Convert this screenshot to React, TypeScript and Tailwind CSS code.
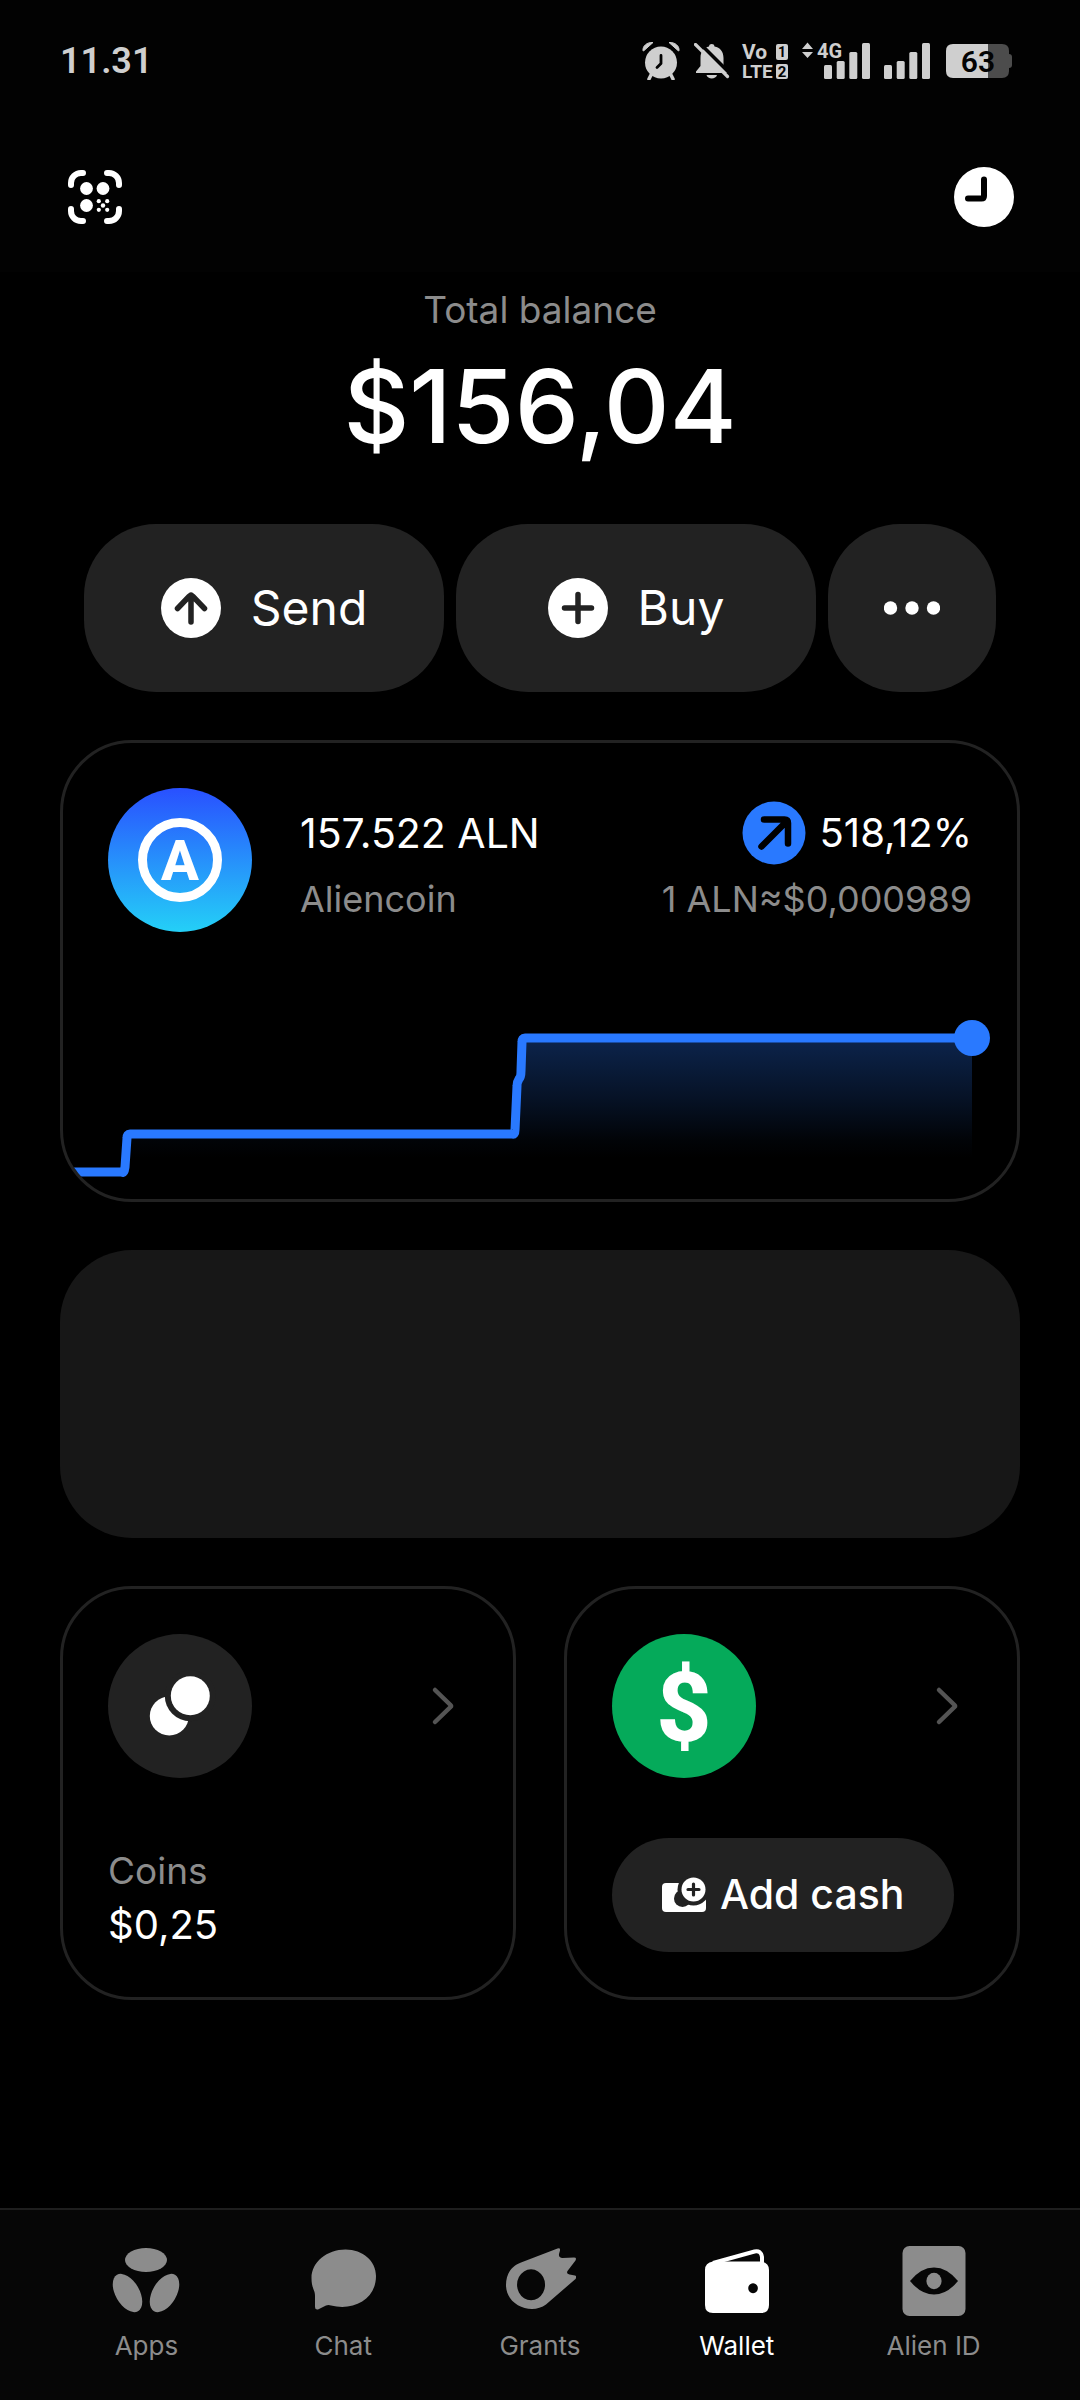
import type { ReactNode } from "react";

function SignalBars() {
  return (
    <svg viewBox="0 0 46 36" className="h-9 w-[46px]" fill="currentColor" aria-hidden="true">
      <rect x="0" y="22" width="8" height="14" rx="1.5" />
      <rect x="12.7" y="18" width="8" height="18" rx="1.5" />
      <rect x="25.3" y="9" width="8" height="27" rx="1.5" />
      <rect x="38" y="0" width="8" height="36" rx="1.5" />
    </svg>
  );
}

function StatusBar() {
  return (
    <div className="flex h-[122px] items-center justify-between pl-[60px] pr-[68px] font-['Roboto',sans-serif] text-[#cfcfcf]">
      <span className="text-4xl font-semibold">11.31</span>

      <div className="flex items-center">
        <svg viewBox="0 0 38 38" className="h-[38px] w-[38px]" fill="currentColor" aria-hidden="true">
          <path d="M1 8.500C.5 4 5 0 11 .5L1.500 9Z" stroke="currentColor" strokeLinejoin="round" />
          <path d="M37 8.500C37.500 4 33 0 27 .5L36.500 9Z" stroke="currentColor" strokeLinejoin="round" />
          <circle cx="19" cy="20.500" r="16" />
          <path d="M9 33l-2 4M29 33l2 4" stroke="currentColor" strokeWidth="3.500" strokeLinecap="round" />
          <path d="M19 13.500v8l-4 4" fill="none" stroke="#030303" strokeWidth="2.800" strokeLinecap="round" strokeLinejoin="round" />
        </svg>

        <svg viewBox="0 0 36 36" className="ml-3.5 h-9 w-9" fill="currentColor" aria-hidden="true">
          <path d="M2 30V28.500L6.500 23V15C6.500 8 10 4.500 15 3.500C15 .2 20.500 .2 20.500 3.500C26 4.500 29.500 8.500 29.500 15V23L33.500 28.500V30Z" />
          <path d="M12.500 32H23C22 36.500 13.500 36.500 12.500 32Z" />
          <path d="M3 -2.500L37 31.500" stroke="#030303" strokeWidth="3.500" />
          <path d="M1.500 1.500L33.500 33.500" stroke="currentColor" strokeWidth="3.200" strokeLinecap="round" />
        </svg>

        <svg viewBox="0 0 46 36" className="ml-3 h-9 w-[46px] overflow-visible" fill="currentColor" role="img" aria-label="VoLTE 1 and 2">
          <text x="0" y="16" fontSize="21" fontWeight="700">Vo</text>
          <text x="0" y="35" fontSize="19" fontWeight="700">LTE</text>
          <rect x="34" y="1" width="12" height="16" rx="2" />
          <rect x="34" y="21" width="12" height="15" rx="2" />
          <text x="40" y="14" fontSize="14" fontWeight="700" fill="#030303" textAnchor="middle">1</text>
          <text x="40" y="34" fontSize="15" fontWeight="700" fill="#030303" textAnchor="middle">2</text>
        </svg>

        <div className="relative ml-9">
          <SignalBars />
          <svg viewBox="0 0 42 18" className="absolute -left-[22px] -top-px h-[18px] w-[42px] overflow-visible" fill="currentColor" role="img" aria-label="4G">
            <path d="M0 7L5.500 .5L11 7ZM0 10L5.500 16L11 10Z" />
            <text x="15" y="16" fontSize="20" fontWeight="700">4G</text>
          </svg>
        </div>

        <div className="ml-3.5">
          <SignalBars />
        </div>

        <svg viewBox="0 0 66 34" className="ml-4 h-[34px] w-[66px] overflow-visible" fill="currentColor" role="img" aria-label="Battery 63%">
          <path d="M62 10h1q3 0 3 3v8q0 3-3 3h-1Z" fill="#4c4c4c" />
          <path d="M42 0h14q7 0 7 7v20q0 7-7 7H42Z" fill="#4c4c4c" />
          <path d="M42 0H7Q0 0 0 7v20q0 7 7 7h35Z" />
          <text x="32" y="28" fontSize="30" fontWeight="600" fill="#030303" textAnchor="middle">63</text>
        </svg>
      </div>
    </div>
  );
}

function ScanIcon() {
  return (
    <svg viewBox="0 0 54 54" className="h-[54px] w-[54px]" fill="currentColor" aria-hidden="true">
      <path
        d="M3 15v-2A10 10 0 0 1 13 3h2M39 3h2a10 10 0 0 1 10 10v2M51 39v2a10 10 0 0 1-10 10h-2M15 51h-2A10 10 0 0 1 3 41v-2"
        fill="none"
        stroke="currentColor"
        strokeWidth="6"
        strokeLinecap="round"
      />
      <circle cx="18.500" cy="18.500" r="6.400" />
      <circle cx="35" cy="18.500" r="6.400" />
      <circle cx="18.500" cy="35.500" r="6.400" />
      <circle cx="35" cy="35.500" r="2.200" />
      <circle cx="30.800" cy="31.200" r="2.100" />
      <circle cx="39.200" cy="31.200" r="2.100" />
      <circle cx="30.800" cy="39.800" r="2.100" />
      <circle cx="39.200" cy="39.800" r="2.100" />
    </svg>
  );
}

function ClockIcon() {
  return (
    <svg viewBox="0 0 60 60" className="h-[60px] w-[60px]" aria-hidden="true">
      <circle cx="30" cy="30" r="30" fill="currentColor" />
      <path d="M30 12.500V29Q30 31.500 27.500 31.500H14" fill="none" stroke="#000" strokeWidth="6" strokeLinecap="round" />
    </svg>
  );
}

function SendIcon() {
  return (
    <svg viewBox="0 0 60 60" className="h-[60px] w-[60px]" aria-hidden="true">
      <circle cx="30" cy="30" r="30" fill="currentColor" />
      <path d="M30 44V17M16.500 30.500L28 18.500Q30 16.500 32 18.500L43.500 30.500" fill="none" stroke="#222" strokeWidth="5.500" strokeLinecap="round" />
    </svg>
  );
}

function BuyIcon() {
  return (
    <svg viewBox="0 0 60 60" className="h-[60px] w-[60px]" aria-hidden="true">
      <circle cx="30" cy="30" r="30" fill="currentColor" />
      <path d="M30 16.500v27M16.500 30h27" stroke="#222" strokeWidth="5.500" strokeLinecap="round" />
    </svg>
  );
}

function AliencoinLogo() {
  return (
    <svg viewBox="0 0 144 144" className="h-36 w-36 shrink-0" role="img" aria-label="Aliencoin logo">
      <defs>
        <linearGradient id="coin" x1="0" y1="0" x2="0" y2="1">
          <stop offset="0" stopColor="#2950ff" />
          <stop offset="1" stopColor="#24d0f7" />
        </linearGradient>
      </defs>
      <circle cx="72" cy="72" r="72" fill="url(#coin)" />
      <circle cx="72" cy="72" r="37.500" fill="none" stroke="#fff" strokeWidth="9" />
      <text x="72" y="92" fontSize="56" fontWeight="800" fontFamily="Roboto, sans-serif" fill="#fff" textAnchor="middle">
        A
      </text>
    </svg>
  );
}

function BalanceChart() {
  return (
    <svg viewBox="0 0 954 267" className="block h-auto w-full" fill="none" role="img" aria-label="Aliencoin price chart">
      <defs>
        <linearGradient id="area" gradientUnits="userSpaceOnUse" x1="0" y1="106" x2="0" y2="226">
          <stop offset="0" stopColor="#2979ff" stopOpacity="0.3" />
          <stop offset="0.5" stopColor="#2979ff" stopOpacity="0.15" />
          <stop offset="0.85" stopColor="#2979ff" stopOpacity="0.03" />
          <stop offset="1" stopColor="#2979ff" stopOpacity="0" />
        </linearGradient>
      </defs>
      <path d="M60 240L65 202H453L457 106H909V240Z" fill="url(#area)" />
      <path
        d="M0 240H59Q61 242 62 235L64 206Q64 202 67 202H449Q452 203 452 198L454 154Q454 150 456 147Q458 145 458 139L459 110Q459 106 462 106H909"
        stroke="#2979ff"
        strokeWidth="9"
        strokeLinejoin="round"
      />
      <circle cx="909" cy="106" r="18" fill="#2979ff" />
    </svg>
  );
}

function CoinsIcon() {
  return (
    <svg viewBox="0 0 144 144" className="h-36 w-36" aria-hidden="true">
      <circle cx="72" cy="72" r="72" fill="#222" />
      <circle cx="61.300" cy="82" r="19.500" fill="#fff" />
      <circle cx="82.300" cy="61.700" r="25.500" fill="#222" />
      <circle cx="82.300" cy="61.700" r="19.500" fill="#fff" />
    </svg>
  );
}

function CashIcon() {
  return (
    <svg viewBox="0 0 144 144" className="h-36 w-36" role="img" aria-label="US dollar">
      <circle cx="72" cy="72" r="72" fill="#05aa5a" />
      <text x="72" y="107" fontSize="96" fontWeight="800" fontFamily="Roboto, sans-serif" fill="#fff" textAnchor="middle">
        $
      </text>
    </svg>
  );
}

function AddCashIcon() {
  return (
    <svg viewBox="0 0 44 36" className="h-9 w-11" aria-hidden="true">
      <rect x="0" y="6" width="44" height="29" rx="4" fill="currentColor" />
      <circle cx="20.500" cy="21.500" r="8.500" fill="#222" />
      <circle cx="31.500" cy="12.500" r="16" fill="#222" />
      <circle cx="31.500" cy="12.500" r="12" fill="currentColor" />
      <path d="M31.500 7v11M26 12.500h11" stroke="#222" strokeWidth="3.200" strokeLinecap="round" />
    </svg>
  );
}

function Chevron() {
  return (
    <svg viewBox="0 0 48 48" className="h-12 w-12" fill="none" aria-hidden="true">
      <path d="M15 8L30.500 23Q31.500 24 30.500 25L15 40" stroke="#545454" strokeWidth="4.500" strokeLinecap="round" />
    </svg>
  );
}

const tabs: { label: string; active?: boolean; icon: ReactNode }[] = [
  {
    label: "Apps",
    icon: (
      <>
        <ellipse cx="36" cy="16" rx="21" ry="12" />
        <ellipse cx="17.500" cy="49" rx="21" ry="12" transform="rotate(60 17.500 49)" />
        <ellipse cx="54.500" cy="49" rx="21" ry="12" transform="rotate(-60 54.500 49)" />
      </>
    ),
  },
  {
    label: "Chat",
    icon: <path d="M38.500 5.500C20 5.500 4.500 18 4.500 34C4.500 41 6 44 7.500 48Q8 50 8 52V63Q8 66 11 65.500L19 61.500Q21.500 60.500 24 61.500C46 67 69 56 69 32C69 17 56 5.500 38.500 5.500Z" />,
  },
  {
    label: "Grants",
    icon: (
      <path
        fillRule="evenodd"
        d="M17 18.500L53.500 4.500Q56.500 3.500 56 6.500L55 10Q54.500 14 58.500 14L70 13.500Q73 13.500 71.500 16.500L63.500 27Q62 30 65.500 30.500L71 31.500Q73.500 32.500 71.500 35L42 60.500C28 71 2 62 2 41C2 30 7.500 22 17 18.500ZM27 25.300a14 15.500 0 1 0 .1 0Z"
      />
    ),
  },
  {
    label: "Wallet",
    active: true,
    icon: (
      <>
        <path fillRule="evenodd" d="M12 17.500H60Q68 18.500 68 26V61Q68 69 60 69H12Q4 69 4 61V26Q4 18.500 12 17.500ZM52 39.200a4.800 5 0 1 0 .1 0Z" />
        <path d="M12 19L53.500 7.500Q60 6 61 13V20" fill="none" stroke="currentColor" strokeWidth="4" />
      </>
    ),
  },
  {
    label: "Alien ID",
    icon: (
      <>
        <rect x="4.500" y="2" width="63" height="70" rx="7" />
        <path d="M12 37Q23 23.500 36 23.500T60 37Q49 50.500 36 50.500T12 37Z" fill="#060606" />
        <ellipse cx="36" cy="37" rx="7.600" ry="8.300" />
      </>
    ),
  },
];

export default function App() {
  return (
    <div className="flex min-h-screen flex-col bg-black font-['Inter',sans-serif] text-white">
      <header className="bg-[#020202]">
        <StatusBar />
        <div className="flex h-[150px] items-center justify-between pl-[68px] pr-[66px]">
          <button type="button" aria-label="Scan code">
            <ScanIcon />
          </button>
          <button type="button" aria-label="History">
            <ClockIcon />
          </button>
        </div>
      </header>

      <main className="flex flex-col px-[60px]">
        <section className="mt-3.5 text-center">
          <h1 className="text-[37px] leading-[48px] text-[#8c8c8c]">Total balance</h1>
          <p className="mt-3 text-[102px] font-medium leading-[120px]">$156,04</p>
        </section>

        <div className="mt-[58px] flex gap-3 px-6 text-[48px]">
          <button type="button" className="flex h-[168px] flex-1 items-center justify-center gap-[30px] rounded-[72px] bg-[#222]">
            <SendIcon />
            Send
          </button>
          <button type="button" className="flex h-[168px] flex-1 items-center justify-center gap-[30px] rounded-[72px] bg-[#222]">
            <BuyIcon />
            Buy
          </button>
          <button type="button" aria-label="More" className="flex h-[168px] w-[168px] items-center justify-center rounded-[72px] bg-[#222]">
            <svg viewBox="0 0 56 14" className="h-3.5 w-14" fill="currentColor" aria-hidden="true">
              <circle cx="6.500" cy="7" r="6.700" />
              <circle cx="28" cy="7" r="6.700" />
              <circle cx="49.500" cy="7" r="6.700" />
            </svg>
          </button>
        </div>

        <section className="mt-12 overflow-hidden rounded-[72px] border-3 border-[#222]">
          <div className="flex items-end gap-12 px-[45px] pt-[45px]">
            <AliencoinLogo />
            <div className="flex-1">
              <h2 className="text-[41px] leading-[66px]">157.522 ALN</h2>
              <p className="text-4xl leading-[66px] text-[#8c8c8c]">Aliencoin</p>
            </div>
            <div className="text-right">
              <p className="flex items-center justify-end gap-3.5 text-[40px] leading-[66px]">
                <svg viewBox="0 0 64 64" className="h-16 w-16" aria-label="Up" role="img">
                  <circle cx="32" cy="32" r="31.500" fill="#2979ff" />
                  <path d="M19.500 45.500L45 20M22 18.500H42.500Q46 18.500 46 22V42.500" fill="none" stroke="#000" strokeWidth="6.500" strokeLinecap="round" />
                </svg>
                518,12%
              </p>
              <p className="text-4xl leading-[66px] text-[#8c8c8c]">1 ALN≈$0,000989</p>
            </div>
          </div>
          <BalanceChart />
        </section>

        <div className="mt-12 h-72 rounded-[72px] bg-[#171717]" />

        <section className="mt-12 grid grid-cols-2 gap-12">
          <article className="flex flex-col justify-between rounded-[72px] border-3 border-[#222] p-[45px]">
            <div className="flex items-center justify-between">
              <CoinsIcon />
              <a href="#coins" aria-label="Open coins">
                <Chevron />
              </a>
            </div>
            <div>
              <h2 className="text-[37px] leading-[54px] text-[#8c8c8c]">Coins</h2>
              <p className="text-[40px] leading-[54px]">$0,25</p>
            </div>
          </article>

          <article className="flex flex-col items-start rounded-[72px] border-3 border-[#222] p-[45px]">
            <div className="flex w-full items-center justify-between">
              <CashIcon />
              <a href="#cash" aria-label="Open cash">
                <Chevron />
              </a>
            </div>
            <button type="button" className="mt-15 flex h-[114px] items-center gap-3.5 whitespace-nowrap rounded-full bg-[#222] px-[50px] text-[41px] font-medium">
              <AddCashIcon />
              Add cash
            </button>
          </article>
        </section>
      </main>

      <nav className="mt-auto flex border-t-2 border-[#1e1e1e] bg-[#060606] px-12 pb-9 pt-[34px]" aria-label="Main">
        {tabs.map((tab) => (
          <a
            key={tab.label}
            href={`#${tab.label.toLowerCase().replace(" ", "-")}`}
            aria-current={tab.active ? "page" : undefined}
            className={`flex flex-1 flex-col items-center gap-3 text-[26px] leading-9 ${tab.active ? "text-white" : "text-[#8c8c8c]"}`}
          >
            <svg viewBox="0 0 72 72" className="h-18 w-18" fill="currentColor" aria-hidden="true">
              {tab.icon}
            </svg>
            {tab.label}
          </a>
        ))}
      </nav>
    </div>
  );
}
